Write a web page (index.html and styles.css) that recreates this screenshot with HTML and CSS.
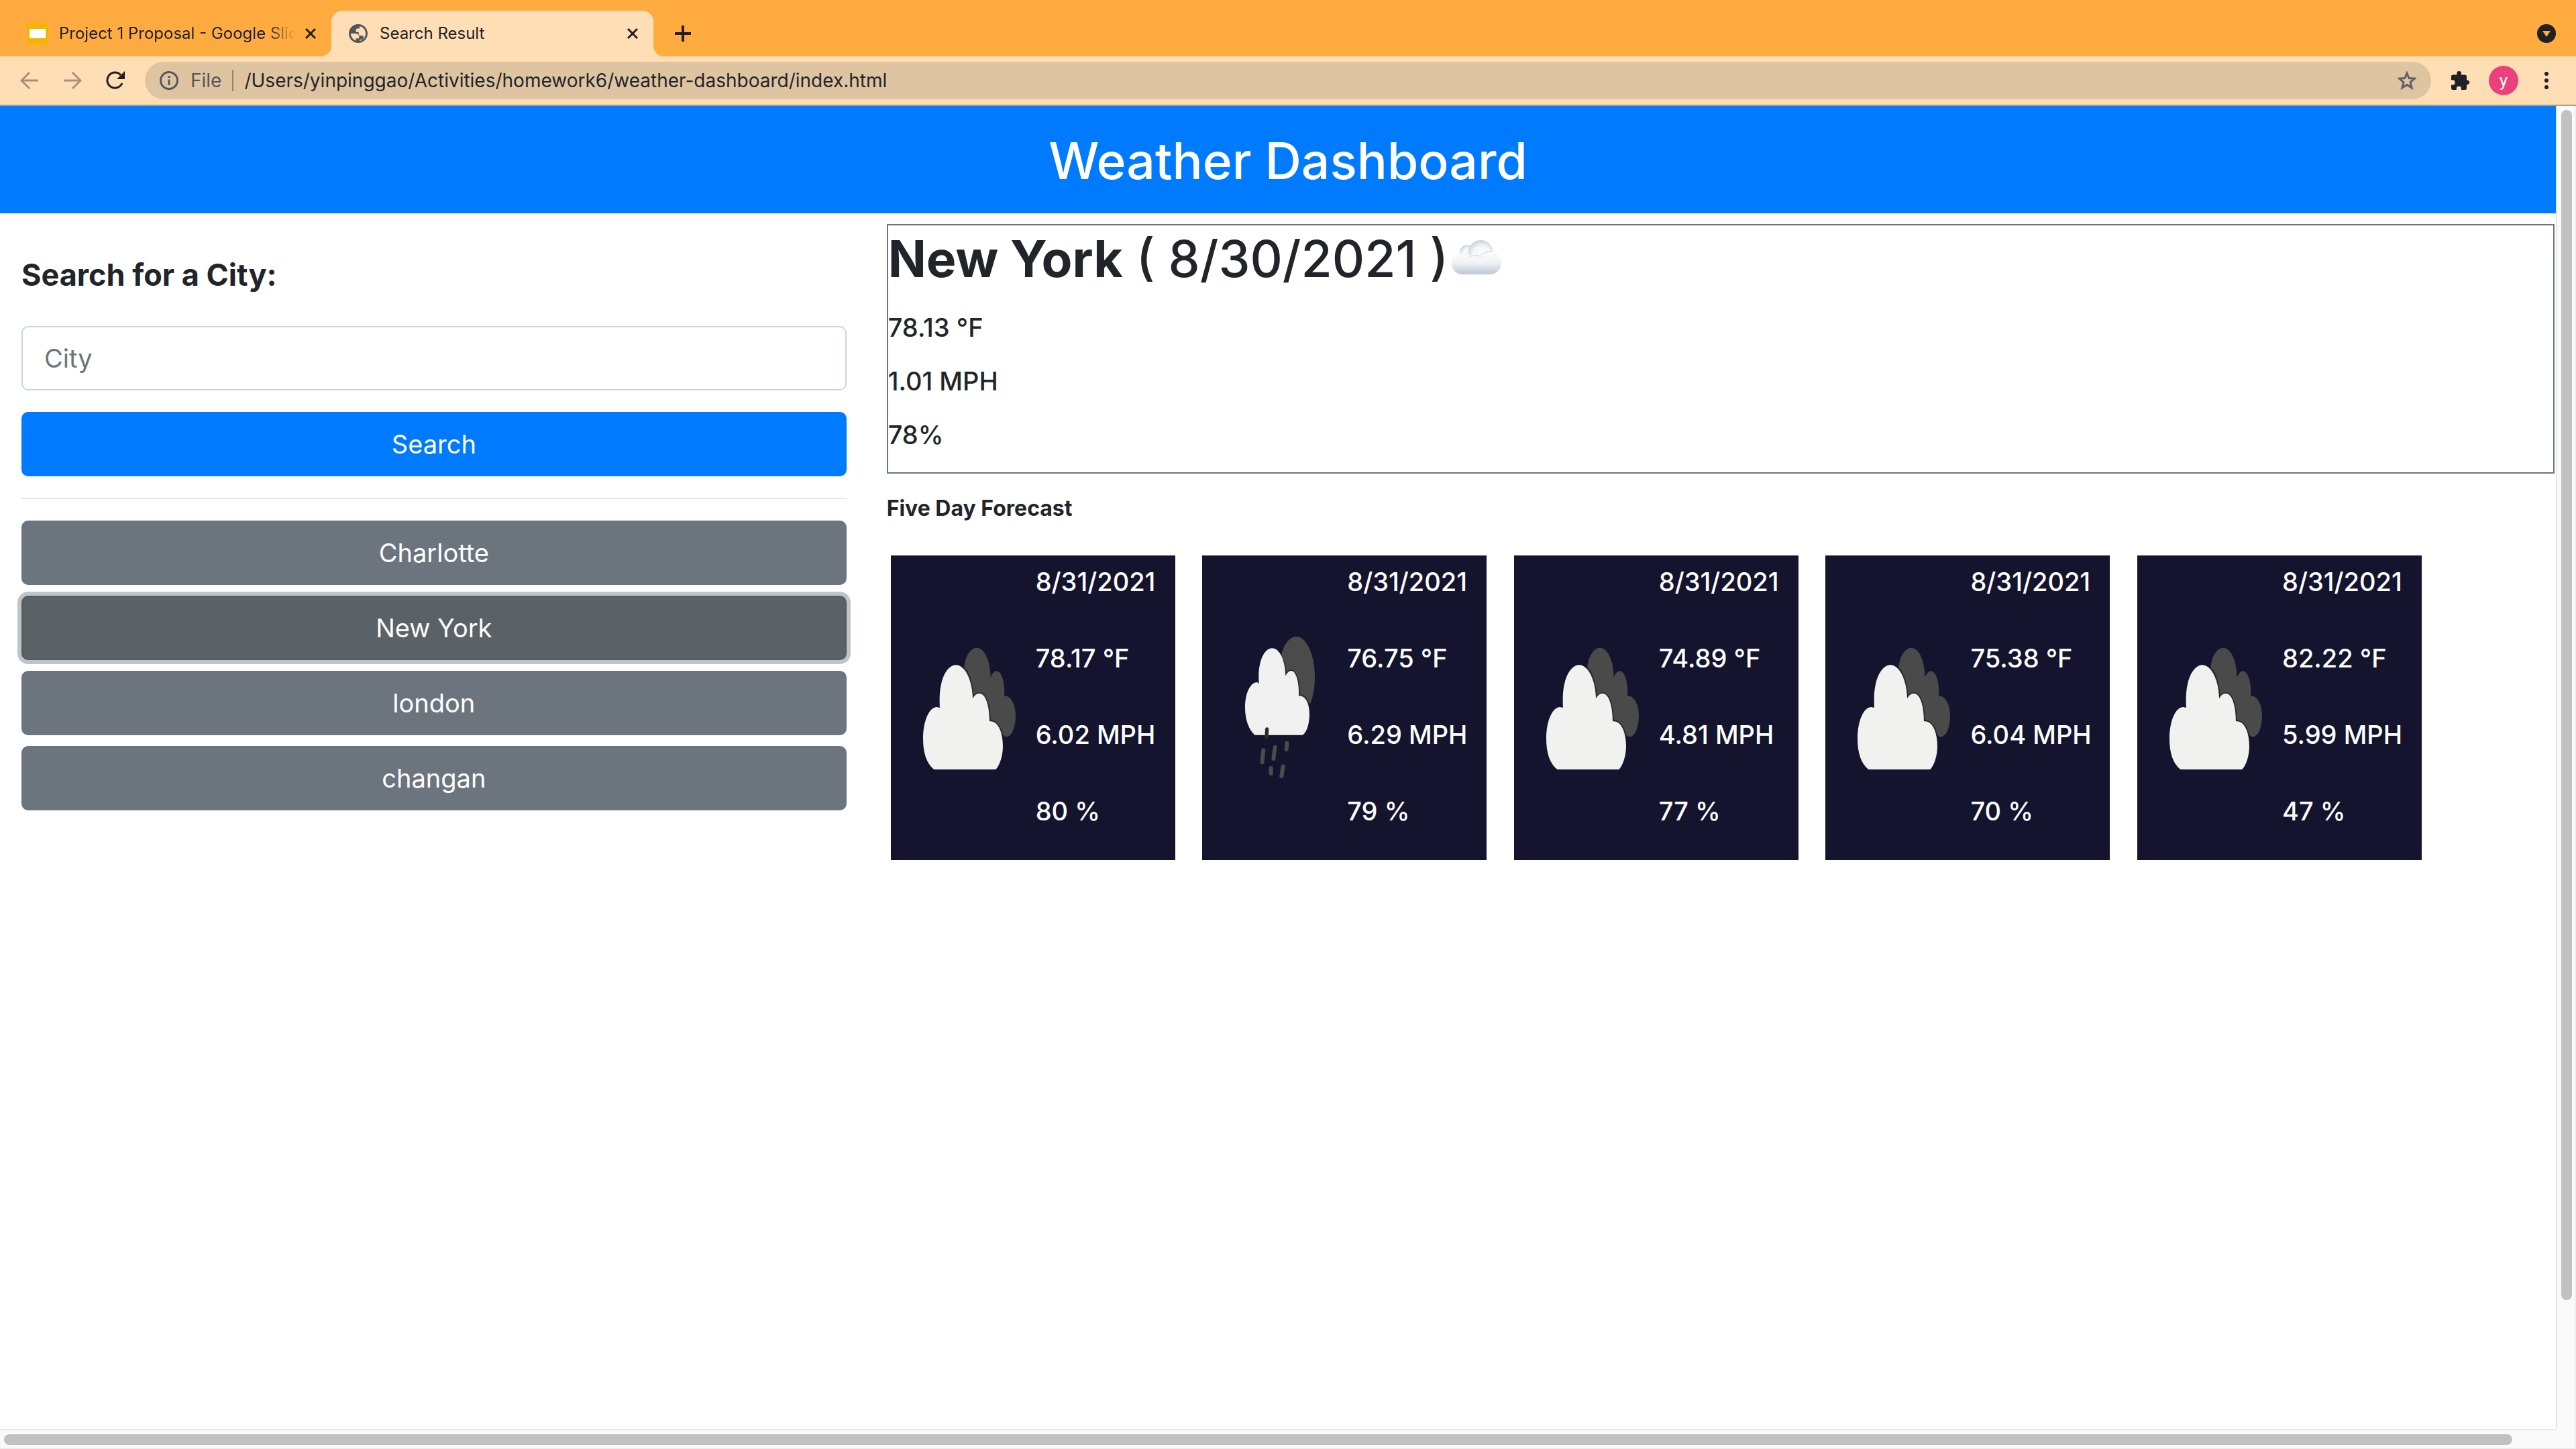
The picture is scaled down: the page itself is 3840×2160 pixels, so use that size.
FILE: index.html
```html
<!DOCTYPE html>
<html lang="en">
<head>
<meta charset="utf-8">
<title>Search Result</title>
<link rel="stylesheet" href="styles.css">
</head>
<body>
<svg class="defs" width="0" height="0" aria-hidden="true">
  <defs>
    <radialGradient id="puff" cx=".55" cy=".6" r=".62">
      <stop offset="0" stop-color="#fdfdfe"/>
      <stop offset=".6" stop-color="#f3f5f7"/>
      <stop offset="1" stop-color="#c6cfd9"/>
    </radialGradient>
    <linearGradient id="base" x1="0" y1="0" x2="0" y2="1">
      <stop offset="0" stop-color="#fafbfc"/>
      <stop offset=".5" stop-color="#f0f3f5"/>
      <stop offset="1" stop-color="#bcc7d2"/>
    </linearGradient>
  </defs>
  <symbol id="clouds" viewBox="-12 -44 540 720">
    <path fill="#4a4a4b" d="M232 130C240 80 262 48 288 48C322 48 349 105 350 180C358 162 366 152 376 152C400 152 415 205 411 262C440 262 462 300 462 350C462 405 444 446 422 446C412 446 404 440 398 420L270 280Z"/>
    <path fill="none" stroke="#29292c" stroke-width="10" d="M238 145C258 180 269 225 270 275C278 260 288 252 300 252C327 252 345 305 345 377C370 374 390 398 399 432"/>
    <path fill="#f1f1ef" d="M97 592C62 565 48 515 48 455C48 375 75 313 110 313L123 316C122 306 122 290 122 275C122 190 155 125 195 125C235 125 268 190 270 275C278 260 288 252 300 252C327 252 345 305 345 377C382 372 405 425 405 487C405 530 392 572 373 592Z"/>
  </symbol>
  <symbol id="rain" viewBox="120 376 540 720">
    <path fill="#4b4b4c" d="M390 500C402 450 428 418 457 418C503 418 540 500 540 600C540 645 532 690 518 720L440 680Z"/>
    <path fill="none" stroke="#29292c" stroke-width="10" d="M392 515C403 535 409 565 409 595C415 580 424 571 434 571C456 571 470 620 468 683C490 680 506 698 513 725"/>
    <path fill="#f1f1f1" d="M272 858C245 835 228 790 228 735C228 670 252 622 283 622L290 630C289 620 289 608 289 596C289 525 315 470 349 470C383 470 408 525 409 595C415 580 424 571 434 571C456 571 470 620 468 683C497 680 516 715 516 765C516 805 505 845 485 858Z"/>
    <g fill="none" stroke="#4b4b4c" stroke-width="18" stroke-linecap="round">
      <path stroke="#2c2c2c" stroke-width="16" d="M326 832L324 866"/>
      <path d="M310 926L304 980M362 912L355 964M415 894L413 922M344 1006L344 1030M398 998L391 1042"/>
    </g>
  </symbol>
</svg>

<div class="browser">
  <nav class="tabs" aria-label="Tabs">
    <div class="tab">
      <svg class="fav" viewBox="0 0 32 32"><rect width="32" height="32" rx="3" fill="#f5b400"/><rect x="4" y="9" width="24" height="14" fill="#fff"/></svg>
      <span class="tab-title tab-fade">Project 1 Proposal - Google Slides</span>
      <button class="icon-btn" aria-label="Close tab"><svg class="x" viewBox="0 0 18 18"><path d="M2 2L16 16M16 2L2 16"/></svg></button>
    </div>
    <div class="tab tab-active">
      <svg class="fav globe" viewBox="2 2 20 20"><path fill="#50555a" d="M12 2C6.480 2 2 6.480 2 12s4.480 10 10 10 10-4.480 10-10S17.520 2 12 2zM4 12h4.400c3.400.02 4.900 1.730 4.500 5.120H9.500v2.500A8 8 0 0 1 4 12zm9.500 7.850v-1.500h2.100a1.900 1.900 0 0 0 1.900-1.900v-2.200h-3.100a1.900 1.900 0 0 1-1.900-1.900v-1.900H9.500V8.500a1.900 1.900 0 0 1 1.900-1.900h2V4.150a8 8 0 0 1 6.500 7.850c0 3.900-2.700 7.100-6.400 7.850z"/></svg>
      <span class="tab-title">Search Result</span>
      <button class="icon-btn" aria-label="Close tab"><svg class="x" viewBox="0 0 18 18"><path d="M2 2L16 16M16 2L2 16"/></svg></button>
    </div>
    <button class="icon-btn new-tab" aria-label="New tab"><svg class="plus" viewBox="0 0 24 24"><path d="M12 0V24M0 12H24"/></svg></button>
    <button class="icon-btn tab-search" aria-label="Search tabs"><svg class="i28" viewBox="0 0 28 28"><circle cx="14" cy="14" r="14" fill="#202124"/><path fill="#ffab40" d="M8 10h12l-6 9z"/></svg></button>
  </nav>

  <div class="toolbar">
    <button class="icon-btn nav-btn dim" aria-label="Back"><svg class="i28" viewBox="0 0 28 28"><path d="M27 14H3M14 2L2 14L14 26"/></svg></button>
    <button class="icon-btn nav-btn dim" aria-label="Forward"><svg class="i28" viewBox="0 0 28 28"><path d="M1 14H25M14 2L26 14L14 26"/></svg></button>
    <button class="icon-btn nav-btn" aria-label="Reload"><svg class="i28" viewBox="0 0 28 28"><path d="M24 18A11.500 11.500 0 1 1 22 6"/><path class="solid" d="M28 0V12H16Z"/></svg></button>
    <div class="omnibox">
      <svg class="i28 info" viewBox="0 0 28 28"><circle cx="14" cy="14" r="12.500"/><path d="M14 12.500V21M14 7V10"/></svg>
      <span class="scheme">File</span>
      <input class="url" type="text" aria-label="Address" value="/Users/yinpinggao/Activities/homework6/weather-dashboard/index.html">
      <button class="icon-btn" aria-label="Bookmark"><svg class="i28 star" viewBox="0 0 28 28"><path d="M14 3L17 10.600L25.500 11.200L19 16.500L21.200 25L14 20.400L6.800 25L9 16.500L2.500 11.200L11 10.600Z"/></svg></button>
    </div>
    <button class="icon-btn ext" aria-label="Extensions"><svg class="i28" viewBox="0 0 28 28"><path fill="#202124" d="M24.500 13.500H23V8a2.500 2.500 0 0 0-2.500-2.500H15V3.300a3.300 3.300 0 0 0-6.600 0V5.500H2.500A2.500 2.500 0 0 0 0 8v5.300h2a3.500 3.500 0 0 1 0 7.200H0V26a2.500 2.500 0 0 0 2.500 2h5.300v-2a3.500 3.500 0 0 1 7.200 0v2h5.500a2.500 2.500 0 0 0 2.500-2.500V20h1.500a3.300 3.300 0 0 0 0-6.500z"/></svg></button>
    <button class="avatar" aria-label="Profile">y</button>
    <button class="icon-btn menu" aria-label="Menu"><svg class="dots" viewBox="0 0 6 26"><circle cx="3" cy="3" r="3"/><circle cx="3" cy="13" r="3"/><circle cx="3" cy="23" r="3"/></svg></button>
  </div>

  <div class="window">
    <div class="viewport">
      <div class="page">
        <header class="banner"><h1>Weather Dashboard</h1></header>
        <div class="columns">
          <aside class="search">
            <form>
              <label class="search-label" for="city">Search for a City:</label>
              <input class="city" id="city" type="text" placeholder="City">
              <button class="btn btn-primary" type="button">Search</button>
            </form>
            <hr class="rule">
            <div class="history">
              <button class="btn">Charlotte</button>
              <button class="btn btn-focus">New York</button>
              <button class="btn">london</button>
              <button class="btn">changan</button>
            </div>
          </aside>
          <main class="results">
            <section class="today">
              <h2><b>New York</b> ( 8/30/2021 )<svg class="emoji" viewBox="134 110 230 156"><circle cx="205" cy="166" r="35" fill="url(#puff)"/><circle cx="265" cy="166" r="56" fill="url(#puff)"/><path fill="url(#base)" d="M182 263A48 48 0 1 1 212 177Q240 172 262 180A54 51 0 1 1 312 263Z"/><path fill="none" stroke="#cdd5dd" stroke-width="3" d="M212 186Q240 170 264 184M262 182Q282 160 314 161"/></svg></h2>
              <p>78.13 °F</p>
              <p>1.01 MPH</p>
              <p>78%</p>
            </section>
            <h3 class="forecast-title">Five Day Forecast</h3>
            <section class="forecast">
              <article class="card">
                <svg class="sky" role="img" aria-label="Broken clouds"><use href="#clouds"/></svg>
                <div class="facts"><p>8/31/2021</p><hr><p>78.17 °F</p><hr><p>6.02 MPH</p><hr><p>80 %</p></div>
              </article>
              <article class="card">
                <svg class="sky" role="img" aria-label="Rain"><use href="#rain"/></svg>
                <div class="facts"><p>8/31/2021</p><hr><p>76.75 °F</p><hr><p>6.29 MPH</p><hr><p>79 %</p></div>
              </article>
              <article class="card">
                <svg class="sky" role="img" aria-label="Broken clouds"><use href="#clouds"/></svg>
                <div class="facts"><p>8/31/2021</p><hr><p>74.89 °F</p><hr><p>4.81 MPH</p><hr><p>77 %</p></div>
              </article>
              <article class="card">
                <svg class="sky" role="img" aria-label="Broken clouds"><use href="#clouds"/></svg>
                <div class="facts"><p>8/31/2021</p><hr><p>75.38 °F</p><hr><p>6.04 MPH</p><hr><p>70 %</p></div>
              </article>
              <article class="card">
                <svg class="sky" role="img" aria-label="Broken clouds"><use href="#clouds"/></svg>
                <div class="facts"><p>8/31/2021</p><hr><p>82.22 °F</p><hr><p>5.99 MPH</p><hr><p>47 %</p></div>
              </article>
            </section>
          </main>
        </div>
      </div>
    </div>
    <div class="track track-y"><div class="thumb"></div></div>
    <div class="track track-x"><div class="thumb"></div></div>
    <div class="corner"></div>
  </div>
</div>
</body>
</html>
```
FILE: styles.css
```css
* { box-sizing: border-box; }

body {
  margin: 0;
  font-family: Inter, "Liberation Sans", sans-serif;
  color: #212529;
  background: #fff;
}

h1, h2, h3, p { margin: 0; }
button, input { font: inherit; color: inherit; }
svg { display: block; flex: none; }
.defs { position: absolute; }

.browser {
  display: flex;
  flex-direction: column;
  height: 100vh;
  overflow: hidden;
}

/* Tab strip */
.tabs {
  display: flex;
  flex: none;
  height: 84px;
  padding: 16px 30px 0 14px;
  background: #ffab40;
  color: #202124;
}

.tab {
  display: flex;
  align-items: center;
  width: 480px;
  padding: 0 22px 0 26px;
  font-size: 24px;
  line-height: 32px;
}

.fav { width: 32px; height: 32px; margin-right: 16px; }
.globe { width: 28px; height: 28px; margin-right: 18px; }

.tab-active {
  position: relative;
  background: #ffdeb5;
  border-radius: 16px 16px 0 0;
}

.tab-active::before,
.tab-active::after {
  content: "";
  position: absolute;
  bottom: 0;
  width: 16px;
  height: 16px;
}

.tab-active::before { right: 100%; background: radial-gradient(circle at 0 0, transparent 16px, #ffdeb5 16px); }
.tab-active::after { left: 100%; background: radial-gradient(circle at 100% 0, transparent 16px, #ffdeb5 16px); }

.tab-title {
  flex: 1;
  min-width: 0;
  overflow: hidden;
  white-space: nowrap;
}

.tab-fade {
  margin-right: 14px;
  mask-image: linear-gradient(to right, #000 88%, transparent);
}

.icon-btn {
  display: flex;
  align-items: center;
  justify-content: center;
  flex: none;
  padding: 0;
  border: 0;
  background: none;
}

.x { width: 18px; height: 18px; fill: none; stroke: #202124; stroke-width: 3; }
.plus { width: 24px; height: 24px; stroke: #202124; stroke-width: 4; }
.new-tab { margin-left: 32px; }
.tab-search { margin-left: auto; }
.i28 { width: 28px; height: 28px; }

/* Toolbar */
.toolbar {
  display: flex;
  align-items: center;
  flex: none;
  height: 74px;
  padding: 0 41px 0 30px;
  background: #ffdeb5;
  border-bottom: 2px solid #b29b7f;
}

.nav-btn { margin-right: 36px; }
.nav-btn svg { fill: none; stroke: #202124; stroke-width: 3; }
.nav-btn .solid { fill: #202124; stroke: none; }
.dim { opacity: .4; }

.omnibox {
  display: flex;
  align-items: center;
  flex: 1;
  height: 56px;
  padding: 0 22px;
  border-radius: 28px;
  background: #dfc4a1;
  font-size: 28px;
}

.nav-btn + .omnibox { margin-left: -6px; }
.info { fill: none; stroke: #55585a; stroke-width: 3; }
.scheme {
  margin: 0 16px 0 18px;
  padding-right: 16px;
  border-right: 2px solid #98876f;
  line-height: 32px;
  color: #55585a;
}
.url { flex: 1; min-width: 0; padding: 0; border: 0; background: none; }
.star { fill: none; stroke: #5f6368; stroke-width: 3; }
.ext { margin-left: 30px; }

.avatar {
  width: 44px;
  height: 44px;
  margin: 0 39px 0 28px;
  padding: 0;
  border: 0;
  border-radius: 50%;
  background: #ec407a;
  color: #fff;
  font-family: Roboto, sans-serif;
  font-size: 26px;
  line-height: 40px;
}

.dots { width: 6px; height: 26px; fill: #202124; }

/* Window and scrollbars */
.window {
  display: grid;
  grid-template: 1fr 30px / 1fr 30px;
  flex: 1;
  min-height: 0;
}

.viewport { min-width: 0; overflow: hidden; }
.page { width: 100vw; }

.track { background: #fafafa; }
.track-y { padding: 6px 4px 6px 6px; border-left: 2px solid #e8e8e8; border-right: 2px solid #ededed; }
.track-x { padding: 6px 4px 4px 6px; border-top: 2px solid #e8e8e8; border-bottom: 2px solid #ededed; }
.corner { background: #fafafa; border-right: 2px solid #ededed; border-bottom: 2px solid #ededed; }
.thumb { border-radius: 8px; background: #c1c1c1; }
.track-y .thumb { width: 16px; height: 90.5%; }
.track-x .thumb { width: 98.4%; height: 16px; }

/* Dashboard */
.banner {
  padding: 34px 32px 30px;
  background: #007bff;
  color: #fff;
  text-align: center;
}

.banner h1, .today h2 { font-size: 75px; font-weight: 500; line-height: 96px; }

.columns {
  display: grid;
  grid-template-columns: calc(100% / 3 - 29px) 1fr;
  gap: 60px;
  padding: 16px 32px 0;
}

.search { padding-top: 48px; }
.search form { display: flex; flex-direction: column; }

.search-label {
  margin-bottom: 48px;
  font-size: 45px;
  font-weight: 700;
  line-height: 56px;
}

.city {
  height: 96px;
  margin-bottom: 32px;
  padding: 0 32px;
  border: 2px solid #ced4da;
  border-radius: 10px;
  background: #fff;
  font-size: 38px;
}

.city::placeholder { color: #6c757d; opacity: 1; }

.btn {
  height: 96px;
  padding: 0 32px;
  border: 2px solid #6c757d;
  border-radius: 10px;
  background: #6c757d;
  color: #fff;
  font-size: 38px;
}

.btn-primary { border-color: #007bff; background: #007bff; }
.btn-focus { border-color: #545b62; background: #5a6268; box-shadow: 0 0 0 6px #c0c4c8; }

.rule { margin: 32px 0; border: 0; border-top: 2px solid #e5e5e5; }
.history { display: flex; flex-direction: column; gap: 16px; }

.today { padding-bottom: 16px; border: 2px solid #6c757d; }
.today h2 { display: flex; align-items: center; white-space: pre; padding-top: 2px; margin-bottom: 30px; }
.today b { font-weight: 700; }
.emoji { width: 78px; height: 52px; margin: 0 0 4px 4px; }

.today p {
  margin-bottom: 32px;
  font-size: 38px;
  font-weight: 500;
  line-height: 48px;
}

.today p:last-child { margin-bottom: 16px; }

.forecast-title { margin: 30px 0 48px; font-size: 32px; font-weight: 700; line-height: 44px; }

.forecast {
  display: flex;
  justify-content: space-between;
  margin: 0 198px 0 6px;
}

.card {
  display: flex;
  align-items: center;
  gap: 8px;
  width: 424px;
  height: 454px;
  padding: 0 28px;
  background: #14142e;
  color: #fff;
}

.sky { width: 180px; height: 240px; }
.facts { align-self: flex-start; flex: 1; padding-top: 15px; }
.facts p { font-size: 38px; font-weight: 500; line-height: 48px; white-space: nowrap; }
.facts hr { margin: 32px 0; border: 0; border-top: 2px solid #12122a; }
```
